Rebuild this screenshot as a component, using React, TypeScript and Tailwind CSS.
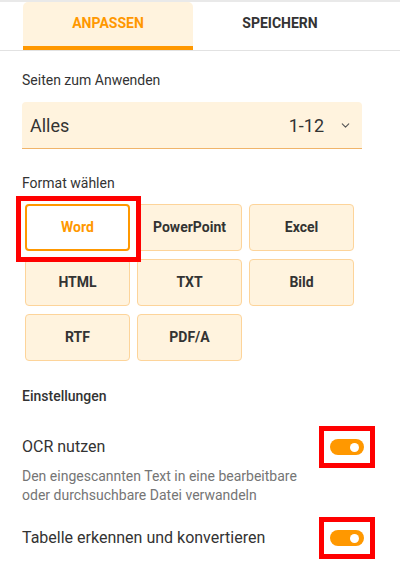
import { ChevronDown } from "lucide-react";

const formats = ["Word", "PowerPoint", "Excel", "HTML", "TXT", "Bild", "RTF", "PDF/A"];

function Toggle() {
  return (
    <div className="relative">
      <span className="pointer-events-none absolute -inset-x-[11px] -inset-y-[13px] border-[5px] border-[#ff0000]" />
      <span className="flex h-4 w-[34px] items-center justify-end rounded-full bg-[#ff9800] pr-[5px]">
        <span className="size-[9px] rounded-full bg-white" />
      </span>
    </div>
  );
}

export default function App() {
  return (
    <div className="h-[573px] w-[400px] overflow-hidden bg-white font-['Roboto',sans-serif] text-[#333]">
      <div className="h-[2px] bg-[#e9e9e9]" />

      <div className="flex border-b border-[#e2e2e2] pl-[23px]">
        <div className="flex h-[48px] w-[170px] items-center justify-center rounded-t-[5px] border-b-4 border-[#ff9800] bg-[#fff3de] pb-[2px] text-[14px] font-bold text-[#ff9800]">
          ANPASSEN
        </div>
        <div className="flex h-[48px] w-[174px] items-center justify-center pb-[6px] text-[14px] font-bold text-[#333]">
          SPEICHERN
        </div>
      </div>

      <div className="px-[22px]">
        <p className="mt-[19px] text-[14px] leading-5 text-[#333]">Seiten zum Anwenden</p>

        <div className="mt-3 flex h-[47px] w-[340px] items-center rounded-t-[4px] border-b border-[#f0b46a] bg-[#fff3de] pr-[10px] pl-2">
          <span className="flex-1 text-[18px]">Alles</span>
          <span className="text-[18px]">1-12</span>
          <ChevronDown size={13} strokeWidth={2} className="ml-[15px] text-[#555]" aria-hidden="true" />
        </div>

        <p className="mt-[24px] text-[14px] leading-5 text-[#333]">Format wählen</p>

        <div className="mt-[11px] ml-[3px] grid w-[329px] grid-cols-3 gap-x-[7px] gap-y-[8px]">
          {formats.map((format) =>
            format === "Word" ? (
              <div key={format} className="relative">
                <span className="pointer-events-none absolute -top-[8px] -right-[11px] -bottom-[11px] -left-[9px] border-[5px] border-[#ff0000]" />
                <button
                  type="button"
                  className="h-[47px] w-full rounded-[4px] border-2 border-[#ff9800] bg-white text-[14px] font-bold text-[#ff9800]"
                >
                  {format}
                </button>
              </div>
            ) : (
              <button
                key={format}
                type="button"
                className="h-[47px] w-full rounded-[4px] border border-[#fdd49a] bg-[#fff3de] text-[14px] font-bold text-[#333]"
              >
                {format}
              </button>
            )
          )}
        </div>

        <p className="mt-[25px] text-[14px] leading-5 font-medium text-[#333]">Einstellungen</p>

        <div className="mt-[29px] flex items-center justify-between pr-[14px]">
          <span className="text-[16px] leading-6">OCR nutzen</span>
          <Toggle />
        </div>
        <p className="mt-[8px] text-[14px] leading-[19px] text-[#757575]">
          Den eingescannten Text in eine bearbeitbare
          <br />
          oder durchsuchbare Datei verwandeln
        </p>

        <div className="mt-[21px] flex items-center justify-between pr-[14px]">
          <span className="text-[16px] leading-6">Tabelle erkennen und konvertieren</span>
          <Toggle />
        </div>
      </div>
    </div>
  );
}
